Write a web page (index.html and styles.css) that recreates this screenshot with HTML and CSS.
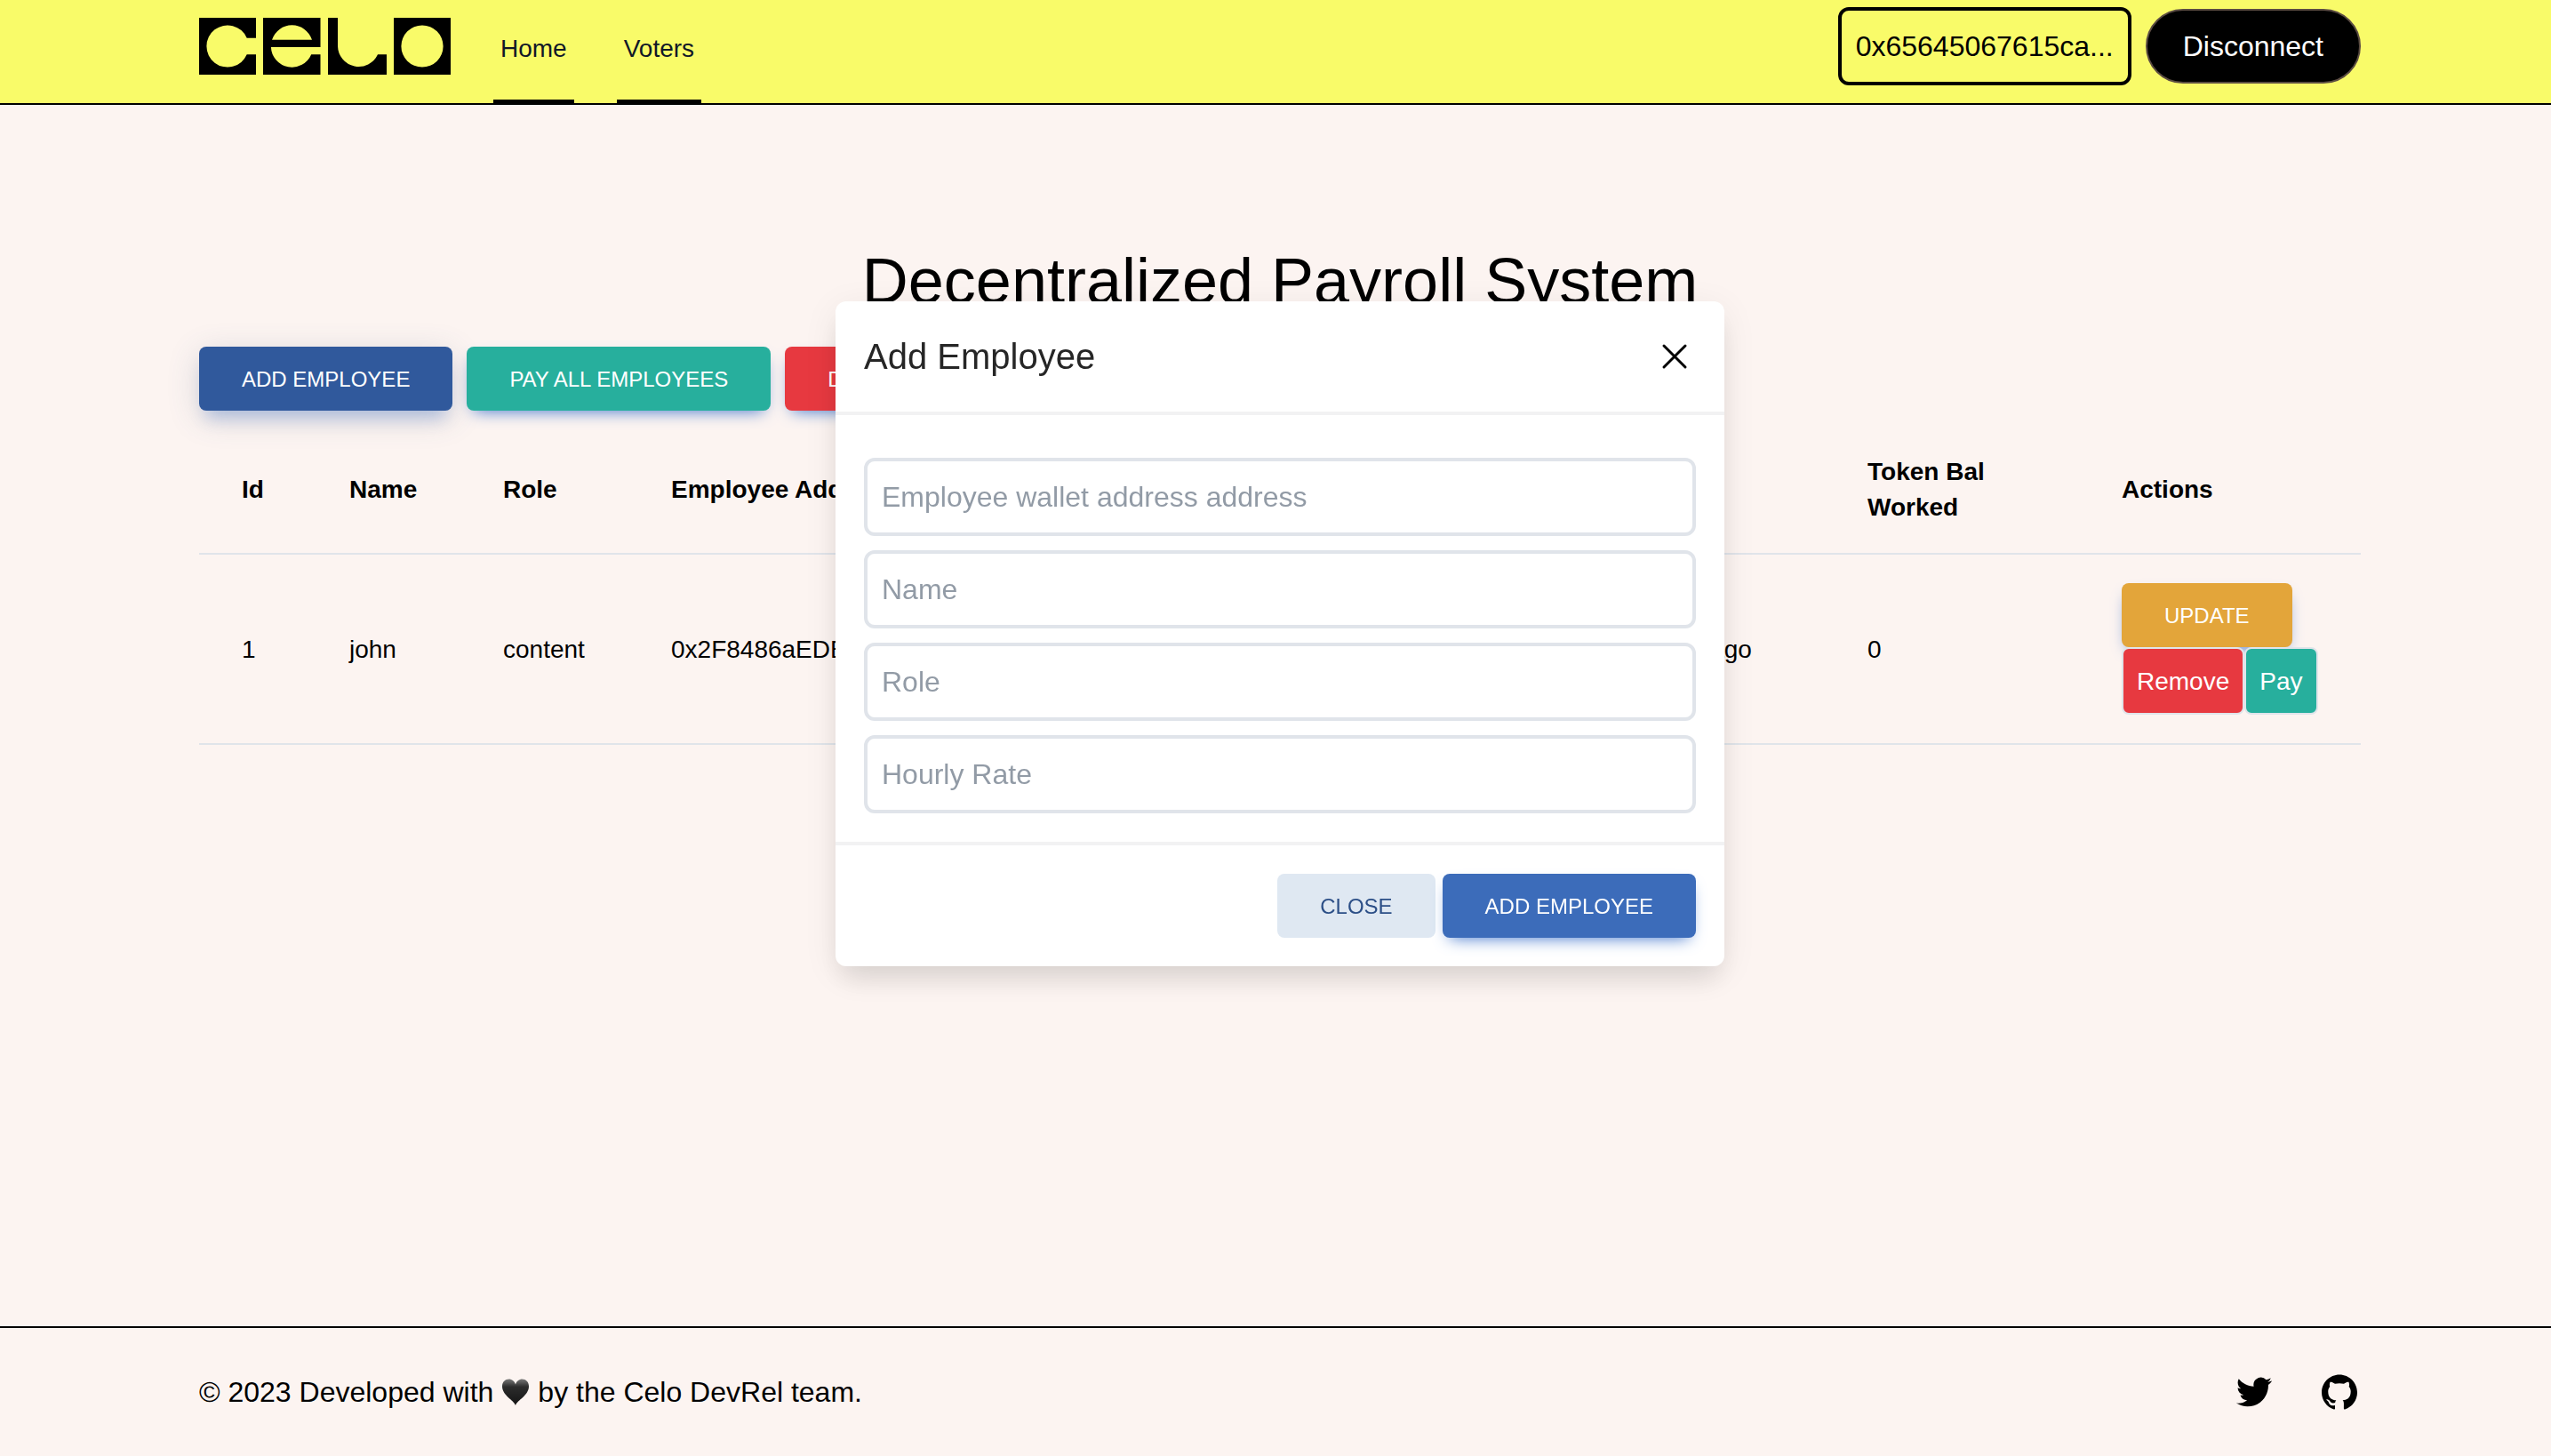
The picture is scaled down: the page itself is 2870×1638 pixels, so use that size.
FILE: index.html
```html
<!DOCTYPE html>
<html lang="en">
<head>
  <meta charset="utf-8">
  <meta name="viewport" content="width=device-width, initial-scale=1">
  <title>Decentralized Payroll System</title>
  <link rel="stylesheet" href="styles.css">
</head>
<body>
  <div class="page">
    <header class="header">
      <div class="container header-inner">
        <a class="logo" href="#" aria-label="Celo">
          <svg width="283" height="64" viewBox="0 0 283 64" fill-rule="evenodd" aria-hidden="true">
            <path d="M0 0H64V22.7H53.7A23.6 23.6 0 1 0 53.7 41.3H64V64H0Z"/>
            <path d="M72 0H136.500V33H80.900A23.600 23.600 0 0 0 126.200 41.300H136.500V64H72ZM82 24.800A23.600 23.600 0 0 1 127 24.800Z"/>
            <path d="M145 0H156V32A23.600 23.600 0 0 0 201 41.300H211V64H145Z"/>
            <path d="M219 0H283V64H219ZM251 8.400A23.600 23.600 0 1 0 251 55.600A23.600 23.600 0 1 0 251 8.400Z"/>
          </svg>
        </a>
        <nav class="nav">
          <a class="nav-link" href="#">Home</a>
          <a class="nav-link" href="#">Voters</a>
        </nav>
        <div class="wallet">
          <button class="wallet-address" type="button">0x65645067615ca...</button>
          <button class="wallet-disconnect" type="button">Disconnect</button>
        </div>
      </div>
    </header>

    <main class="main">
      <div class="container">
        <h1 class="title">Decentralized Payroll System</h1>
        <div class="toolbar">
          <button class="btn btn-primary btn-focused" type="button">ADD EMPLOYEE</button>
          <button class="btn btn-success" type="button">PAY ALL EMPLOYEES</button>
          <button class="btn btn-danger" type="button">DEPOSIT</button>
        </div>
        <table class="employees">
          <colgroup>
            <col class="col-id">
            <col class="col-name">
            <col class="col-role">
            <col>
            <col class="col-time">
            <col class="col-token">
            <col class="col-actions">
          </colgroup>
          <thead>
            <tr>
              <th scope="col">Id</th>
              <th scope="col">Name</th>
              <th scope="col">Role</th>
              <th scope="col">Employee Address</th>
              <th scope="col">Joined</th>
              <th scope="col">Token Bal<br>Worked</th>
              <th scope="col">Actions</th>
            </tr>
          </thead>
          <tbody>
            <tr>
              <td>1</td>
              <td>john</td>
              <td>content</td>
              <td>0x2F8486aEDE...</td>
              <td>2 hours ago</td>
              <td>0</td>
              <td class="cell-actions">
                <button class="btn btn-warning" type="button">UPDATE</button>
                <div class="row-actions">
                  <button class="btn-small btn-remove" type="button">Remove</button>
                  <button class="btn-small btn-pay" type="button">Pay</button>
                </div>
              </td>
            </tr>
          </tbody>
        </table>
      </div>
    </main>

    <footer class="footer">
      <div class="container footer-inner">
        <p class="copyright">
          © 2023 Developed with
          <svg class="heart" width="32" height="32" viewBox="0 0 32 32" role="img" aria-label="love">
            <defs>
              <linearGradient id="heart-fill" x1="0" y1="0" x2="0" y2="1">
                <stop offset="0" stop-color="#777"/>
                <stop offset=".3" stop-color="#2c2c2c"/>
                <stop offset="1" stop-color="#141414"/>
              </linearGradient>
            </defs>
            <path fill="url(#heart-fill)" d="M16 31C14 25 1 20 1 9.500C1 4.500 4.500 1.500 8.500 1.500C12 1.500 15 4 16 7.500C17 4 20 1.500 23.500 1.500C27.500 1.500 31 4.500 31 9.500C31 20 18 25 16 31Z"/>
          </svg>
          by the Celo DevRel team.
        </p>
        <div class="social">
          <a href="#" aria-label="Twitter">
            <svg width="40" height="40" viewBox="0 0 24 24" aria-hidden="true"><path d="M23.953 4.570a10 10 0 01-2.825.775 4.958 4.958 0 002.163-2.723c-.951.555-2.005.959-3.127 1.184a4.920 4.920 0 00-8.384 4.482C7.690 8.095 4.067 6.130 1.640 3.162a4.822 4.822 0 00-.666 2.475c0 1.710.870 3.213 2.188 4.096a4.904 4.904 0 01-2.228-.616v.060a4.923 4.923 0 003.946 4.827 4.996 4.996 0 01-2.212.085 4.936 4.936 0 004.604 3.417 9.867 9.867 0 01-6.102 2.105c-.390 0-.779-.023-1.170-.067a13.995 13.995 0 007.557 2.209c9.053 0 13.998-7.496 13.998-13.985 0-.210 0-.420-.015-.630A9.935 9.935 0 0024 4.590z"/></svg>
          </a>
          <a href="#" aria-label="GitHub">
            <svg width="40" height="40" viewBox="0 0 24 24" aria-hidden="true"><path d="M12 .297c-6.630 0-12 5.373-12 12 0 5.303 3.438 9.800 8.205 11.385.6.113.820-.258.820-.577 0-.285-.010-1.040-.015-2.040-3.338.724-4.042-1.610-4.042-1.610C4.422 18.070 3.633 17.700 3.633 17.700c-1.087-.744.084-.729.084-.729 1.205.084 1.838 1.236 1.838 1.236 1.070 1.835 2.809 1.305 3.495.998.108-.776.417-1.305.760-1.605-2.665-.3-5.466-1.332-5.466-5.930 0-1.310.465-2.380 1.235-3.220-.135-.303-.540-1.523.105-3.176 0 0 1.005-.322 3.300 1.230.960-.267 1.980-.399 3-.405 1.020.006 2.040.138 3 .405 2.280-1.552 3.285-1.230 3.285-1.230.645 1.653.240 2.873.120 3.176.765.840 1.230 1.910 1.230 3.220 0 4.610-2.805 5.625-5.475 5.920.420.360.810 1.096.810 2.220 0 1.606-.015 2.896-.015 3.286 0 .315.210.690.825.570C20.565 22.092 24 17.592 24 12.297c0-6.627-5.373-12-12-12"/></svg>
          </a>
        </div>
      </div>
    </footer>
  </div>

  <div class="overlay">
    <form class="modal" role="dialog" aria-labelledby="modal-title">
      <div class="modal-header">
        <h2 class="modal-title" id="modal-title">Add Employee</h2>
        <button class="modal-close" type="button" aria-label="Close">
          <svg width="48" height="48" viewBox="0 0 24 24" fill="none" stroke="#000" stroke-width="1.500" stroke-linecap="round" aria-hidden="true"><path d="M6 18L18 6M6 6l12 12"/></svg>
        </button>
      </div>
      <div class="modal-body">
        <input class="field" type="text" aria-label="Employee wallet address" placeholder="Employee wallet address address">
        <input class="field" type="text" aria-label="Name" placeholder="Name">
        <input class="field" type="text" aria-label="Role" placeholder="Role">
        <input class="field" type="text" aria-label="Hourly Rate" placeholder="Hourly Rate">
      </div>
      <div class="modal-footer">
        <button class="btn btn-light" type="button">CLOSE</button>
        <button class="btn btn-submit" type="button">ADD EMPLOYEE</button>
      </div>
    </form>
  </div>
</body>
</html>
```

FILE: styles.css
```css
* {
  box-sizing: border-box;
}

body {
  margin: 0;
  background: #fcf4f1;
  color: #000;
  font-family: "Liberation Sans", Arial, sans-serif;
  font-size: 28px;
  line-height: 40px;
}

button,
input {
  margin: 0;
  font-family: inherit;
}

a {
  color: inherit;
  text-decoration: none;
}

svg {
  display: block;
}

.page {
  display: flex;
  flex-direction: column;
  min-height: 100vh;
}

.header,
.main,
.footer {
  padding-left: 10px;
}

.container {
  width: 100%;
  max-width: 2432px;
  margin: 0 auto;
}

/* Header */
.header {
  background: #f9fb69;
  border-bottom: 2px solid #000;
}

.header-inner {
  display: flex;
  height: 116px;
}

.logo {
  padding-top: 20px;
}

.nav {
  display: flex;
  gap: 48px;
  margin-left: 48px;
}

.nav-link {
  display: flex;
  align-items: center;
  padding: 0 8px 2px;
  border-bottom: 4px solid #000;
  color: #111827;
}

.wallet {
  display: flex;
  align-items: center;
  gap: 16px;
  margin-left: auto;
  padding-bottom: 12px;
}

.wallet-address {
  height: 88px;
  padding: 0 16px;
  border: 4px solid #000;
  border-radius: 12px;
  background: transparent;
  color: #000;
  font-size: 32px;
}

.wallet-disconnect {
  height: 84px;
  padding: 0 40px;
  border: 2px solid #5b4c42;
  border-radius: 42px;
  background: #000;
  color: #fff;
  font-size: 32px;
}

/* Main */
.main {
  flex: 1;
  padding-top: 158px;
}

.title {
  margin: 0 0 34px;
  font-size: 72px;
  font-weight: 400;
  line-height: 80px;
  text-align: center;
}

.toolbar {
  display: flex;
  gap: 16px;
  margin-bottom: 16px;
}

.btn {
  height: 72px;
  padding: 2px 48px 0;
  border: 0;
  border-radius: 8px;
  color: #fff;
  font-size: 24px;
  box-shadow: 0 8px 18px -8px #3b71ca;
}

.btn-primary {
  background: #30599c;
}

.btn-focused {
  box-shadow: 0 16px 18px -8px rgba(59, 113, 202, 0.3), 0 8px 36px 0 rgba(59, 90, 130, 0.2);
}

.btn-success {
  background: #27af9d;
}

.btn-danger {
  background: #e73940;
}

.btn-warning {
  display: block;
  background: #e3a53a;
}

.btn-light {
  background: #dfe8f2;
  color: #2c4f87;
  box-shadow: none;
}

.btn-submit {
  background: #3c6cba;
}

/* Table */
.employees {
  width: 100%;
  border-collapse: separate;
  border-spacing: 0;
  table-layout: fixed;
  text-align: left;
}

.col-id {
  width: 121px;
}

.col-name {
  width: 173px;
}

.col-role {
  width: 189px;
}

.col-time {
  width: 278px;
}

.col-token {
  width: 286px;
}

.col-actions {
  width: 317px;
}

.employees th,
.employees td {
  padding: 33px 0 31px 48px;
  border-bottom: 2px solid #e0e4ea;
  white-space: nowrap;
}

.employees .cell-actions {
  padding: 32px 0 32px 48px;
}

.row-actions {
  display: flex;
}

.btn-small {
  height: 76px;
  padding: 2px 15px 0;
  border: 2px solid #e0e4ea;
  border-radius: 8px;
  color: #fff;
  font-size: 28px;
}

.btn-remove {
  background: #e73940;
}

.btn-pay {
  background: #27af9d;
}

/* Footer */
.footer {
  border-top: 2px solid #000;
}

.footer-inner {
  display: flex;
  align-items: center;
  justify-content: space-between;
  height: 144px;
}

.copyright {
  display: flex;
  align-items: center;
  gap: 9px;
  margin: 0;
  font-size: 32px;
}

.social {
  display: flex;
  gap: 56px;
  padding-right: 4px;
}

/* Dialog */
.overlay {
  position: fixed;
  inset: 0;
  padding: 339px 0 0 10px;
}

.modal {
  width: 1000px;
  max-width: 100%;
  margin: 0 auto;
  border-radius: 12px;
  background: #fff;
  box-shadow: 0 20px 30px -6px rgba(0, 0, 0, 0.1), 0 8px 40px 0 rgba(0, 0, 0, 0.07);
}

.modal-header {
  display: flex;
  align-items: center;
  justify-content: space-between;
  height: 128px;
  padding: 0 32px;
  border-bottom: 4px solid #f2f2f3;
}

.modal-title {
  margin: 0;
  color: #262626;
  font-size: 40px;
  font-weight: 400;
}

.modal-close {
  padding: 0;
  border: 0;
  background: none;
}

.modal-body {
  display: flex;
  flex-direction: column;
  gap: 16px;
  padding: 48px 32px 32px;
}

.field {
  width: 100%;
  height: 88px;
  padding: 0 16px;
  border: 4px solid #e0e4ea;
  border-radius: 12px;
  background: #fff;
  font-size: 32px;
}

.field::placeholder {
  color: #929ba6;
  opacity: 1;
}

.modal-footer {
  display: flex;
  justify-content: flex-end;
  gap: 8px;
  padding: 32px;
  border-top: 4px solid #f2f2f3;
}
```
